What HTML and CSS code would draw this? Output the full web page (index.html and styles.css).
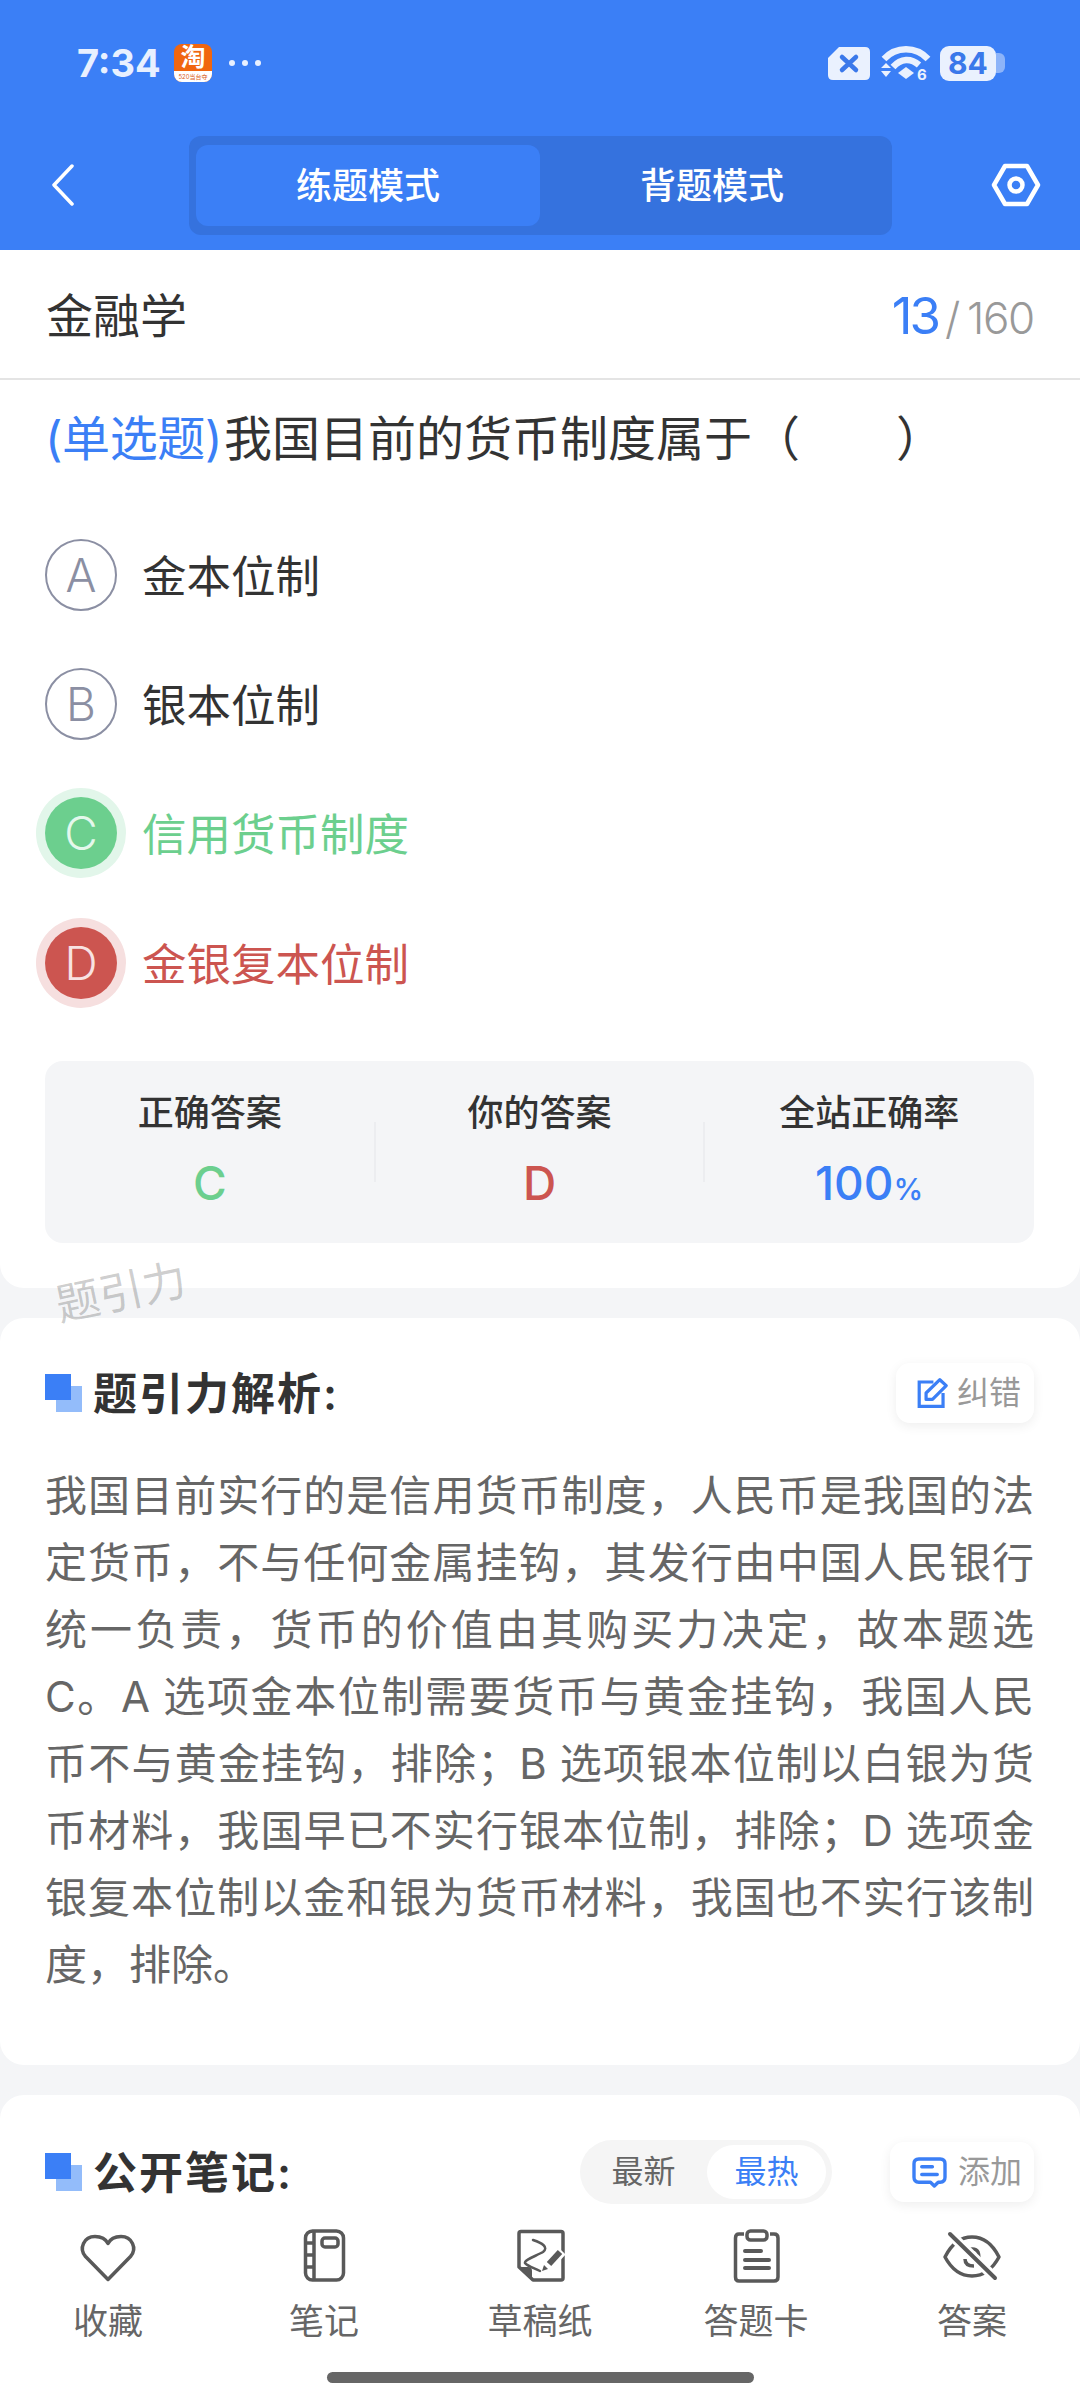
FILE: index.html
```html
<!DOCTYPE html>
<html lang="zh-CN">

<head>
  <meta charset="UTF-8">
  <meta name="viewport" content="width=device-width, initial-scale=1.0">
  <title>金融学</title>
  <link rel="stylesheet" href="styles.css">
</head>

<body>
  <div class="main">
    <header class="top">
      <div class="status">
        <div class="status-left">
          <span class="time">7:34</span>
          <span class="tao">
            <span class="tao-char">淘</span>
            <span class="tao-sub">520当台夺</span>
          </span>
          <span class="dots"><i></i><i></i><i></i></span>
        </div>
        <div class="status-right">
          <svg class="ic-sim" viewBox="0 0 44 35">
            <path d="M12 1H38Q43 1 43 6V29Q43 34 38 34H6Q1 34 1 29V12Z" fill="#eaf1fe" />
            <path d="M15 11L29 24M29 11L15 24" stroke="#3a78ea" stroke-width="4.5" stroke-linecap="round" />
          </svg>
          <svg class="ic-wifi" viewBox="0 -3 50 44">
            <path d="M3 15C15 2 35 2 47 15" fill="none" stroke="#eaf1fe" stroke-width="6.5" />
            <path d="M12 23C20 14 30 14 38 21" fill="none" stroke="#eaf1fe" stroke-width="6.5" />
            <path d="M17 29L25 23L33 29L25 35Z" fill="#eaf1fe" />
            <path d="M0 24L5 19L10 24ZM0 27H10L5 33Z" fill="#eaf1fe" />
            <text x="36" y="36" class="wifi-six">6</text>
          </svg>
          <span class="battery">
            <span class="battery-body">84</span>
            <span class="battery-nub"></span>
          </span>
        </div>
      </div>
      <nav class="nav">
        <svg class="ic-back" viewBox="0 0 24 42">
          <path d="M21 2L3 21L21 40" fill="none" stroke="#fff" stroke-width="3.5" stroke-linecap="round" stroke-linejoin="round" />
        </svg>
        <div class="modes">
          <a class="mode cur">练题模式</a>
          <a class="mode">背题模式</a>
        </div>
        <svg class="ic-hex" viewBox="0 0 50 44">
          <path d="M14 3H36L47 22L36 41H14L3 22Z" fill="none" stroke="#fff" stroke-width="4.5" stroke-linejoin="round" />
          <circle cx="25" cy="22" r="6.5" fill="none" stroke="#fff" stroke-width="4.5" />
        </svg>
      </nav>
    </header>

    <section class="card card-q">
      <div class="subject">
        <span class="subject-name">金融学</span>
        <span class="progress"><b>13</b><i>/</i>160</span>
      </div>
      <h1 class="question"><span class="q-type">(单选题)</span>我国目前的货币制度属于（　　）</h1>
      <ul class="options">
        <li class="option"><span class="letter">A</span><span class="opt-text">金本位制</span></li>
        <li class="option"><span class="letter">B</span><span class="opt-text">银本位制</span></li>
        <li class="option right"><span class="letter">C</span><span class="opt-text">信用货币制度</span></li>
        <li class="option wrong"><span class="letter">D</span><span class="opt-text">金银复本位制</span></li>
      </ul>
      <div class="stats">
        <div class="stat">
          <span class="stat-label">正确答案</span>
          <span class="stat-value green">C</span>
        </div>
        <div class="stat">
          <span class="stat-label">你的答案</span>
          <span class="stat-value red">D</span>
        </div>
        <div class="stat">
          <span class="stat-label">全站正确率</span>
          <span class="stat-value blue">100<small>%</small></span>
        </div>
      </div>
    </section>

    <section class="card card-parse">
      <div class="sec-head">
        <span class="mark"></span>
        <h2 class="sec-title">题引力解析:</h2>
        <a class="sec-btn">
          <svg class="ic-edit" viewBox="0 0 36 34">
            <path d="M19 5H3.5V31.500H29.500V17" fill="none" stroke="#3b7ff6" stroke-width="3.500" />
            <path d="M11 24V17L26 2.500L33 9L18 24Z" fill="none" stroke="#3b7ff6" stroke-width="3.500" stroke-linejoin="round" />
          </svg>
          纠错
        </a>
      </div>
      <p class="parse">我国目前实行的是信用货币制度，人民币是我国的法定货币，不与任何金属挂钩，其发行由中国人民银行统一负责，货币的价值由其购买力决定，故本题选 C。A 选项金本位制需要货币与黄金挂钩，我国人民币不与黄金挂钩，排除；B 选项银本位制以白银为货币材料，我国早已不实行银本位制，排除；D 选项金银复本位制以金和银为货币材料，我国也不实行该制度，排除。</p>
    </section>

    <section class="card card-notes">
      <div class="sec-head">
        <span class="mark"></span>
        <h2 class="sec-title">公开笔记:</h2>
        <div class="sort">
          <a class="sort-item">最新</a>
          <a class="sort-item cur">最热</a>
        </div>
        <a class="sec-btn sec-btn-add">
          <svg class="ic-note" viewBox="0 0 36 32">
            <path d="M7 2H29Q34 2 34 7V21Q34 26 29 26H27L23 30L19 26H7Q2 26 2 21V7Q2 2 7 2Z" fill="none" stroke="#3b7ff6" stroke-width="3.500" stroke-linejoin="round" />
            <path d="M10 10H21M10 18H26" stroke="#3b7ff6" stroke-width="3.500" stroke-linecap="round" />
          </svg>
          添加
        </a>
      </div>
    </section>
  </div>

  <footer class="tabbar">
    <ul class="tabs">
      <li class="tab">
        <svg class="tab-ic" viewBox="0 0 64 64">
          <path d="M32 51.500L9.500 28.500C2.500 20.500 8 8.500 19 8.500C25 8.500 30 11.500 32 15.500C34 11.500 39 8.500 45 8.500C56 8.500 61.500 20.500 54.500 28.500Z" />
        </svg>
        <span>收藏</span>
      </li>
      <li class="tab">
        <svg class="tab-ic" viewBox="0 0 64 64">
          <rect x="13.500" y="3" width="38" height="49" rx="7" />
          <path d="M22 3V52M13.500 15H22M13.500 27H22M13.500 39H22" />
          <rect x="30" y="10" width="16" height="9" rx="3" />
        </svg>
        <span>笔记</span>
      </li>
      <li class="tab">
        <svg class="tab-ic" viewBox="0 0 64 64">
          <path d="M13 3.500H53Q55 3.500 55 5.500V50Q55 52 53 52H25L11 39V5.500Q11 3.500 13 3.500Z" />
          <path d="M11 39H20Q24 39 24 43V52Z" class="fill" />
          <path d="M25 12C34 15 41 19 35 24C28 28 16 32 17 35C19 38 26 40 32 43" class="thin" />
          <path d="M40 38L54 23" class="gap" />
          <path d="M41 36L52 24" class="pen" />
          <path d="M34 43L36 37L40 41Z" class="fill" />
        </svg>
        <span>草稿纸</span>
      </li>
      <li class="tab">
        <svg class="tab-ic" viewBox="0 0 64 64">
          <path d="M20 6H15Q11.500 6 11.500 10V49Q11.500 53 15 53H50Q54 53 54 49V10Q54 6 50 6H46" />
          <rect x="23" y="3" width="20" height="9" rx="3.500" />
          <path d="M21 23H37M21 32H45M21 40H45" class="round" />
        </svg>
        <span>答题卡</span>
      </li>
      <li class="tab">
        <svg class="tab-ic" viewBox="0 0 64 64">
          <path d="M5 29C12 15 22 9 32 9C42 9 52 15 59 29C52 42 42 48 32 48C22 48 12 42 5 29Z" />
          <path d="M25 31C25 36 29 38 34 38M26 24C29 20 36 20 38 24C39 27 39 30 38 32" />
          <path d="M10 6L55 50" class="gap" />
          <path d="M10 6L55 50" class="round" />
        </svg>
        <span>答案</span>
      </li>
    </ul>
    <div class="home-bar"></div>
  </footer>

  <div class="watermark">题引力</div>
</body>

</html>
```

FILE: styles.css
```css
html,
body {
  margin: 0;
  padding: 0;
}

body {
  position: relative;
  width: 1080px;
  height: 2400px;
  overflow: hidden;
  display: flex;
  flex-direction: column;
  background-color: #f4f5f7;
  color: #333;
  font-family: "Inter", "Noto Sans CJK SC", sans-serif;
}

ul {
  list-style: none;
  padding: 0;
  margin: 0;
}

h1,
h2,
p {
  margin: 0;
}

.main {
  height: 2215px;
  overflow: hidden;
  flex: none;
}

/* header */
.top {
  background-color: #3b7ff6;
  height: 250px;
}

.status {
  height: 126px;
  display: flex;
  justify-content: space-between;
  align-items: center;
  padding: 0 75px 0 77px;
}

.status-left,
.status-right {
  display: flex;
  align-items: center;
}

.time {
  font-size: 38px;
  font-weight: 700;
  color: #e8f0ff;
  width: 97px;
}

.tao {
  width: 38px;
  height: 38px;
  border-radius: 8px;
  display: flex;
  flex-direction: column;
  align-items: center;
  background-color: #f0660f;
}

.tao-char {
  height: 27px;
  line-height: 27px;
  font-size: 25px;
  font-weight: 700;
  color: #fff;
}

.tao-sub {
  width: 100%;
  height: 11px;
  line-height: 11px;
  font-size: 6px;
  text-align: center;
  white-space: nowrap;
  border-radius: 0 0 8px 8px;
  background-color: #fff;
  color: #d9601a;
}

.dots {
  display: flex;
  gap: 7px;
  margin-left: 17px;
}

.dots i {
  width: 6px;
  height: 6px;
  border-radius: 50%;
  background-color: #e8f0ff;
}

.ic-sim {
  width: 44px;
  height: 35px;
}

.ic-wifi {
  width: 50px;
  height: 44px;
  margin-left: 10px;
}

.wifi-six {
  font-size: 15px;
  font-weight: 700;
  fill: #eaf1fe;
}

.battery {
  display: flex;
  align-items: center;
  margin-left: 9px;
}

.battery-body {
  width: 56px;
  height: 35px;
  line-height: 35px;
  border-radius: 9px;
  background-color: #eaf1fe;
  color: #3a78ea;
  font-size: 30px;
  font-weight: 700;
  text-align: center;
}

.battery-nub {
  width: 9px;
  height: 20px;
  border-radius: 0 6px 6px 0;
  background-color: #8db4f9;
}

.nav {
  height: 124px;
  display: grid;
  grid-template-columns: 189px 703px 1fr;
  align-items: start;
  padding-top: 10px;
  box-sizing: border-box;
}

.ic-back {
  width: 24px;
  height: 42px;
  margin: 28px 0 0 51px;
}

.modes {
  height: 99px;
  box-sizing: border-box;
  padding: 9px 7px;
  display: flex;
  border-radius: 12px;
  background-color: #3572de;
}

.mode {
  width: 344px;
  height: 81px;
  line-height: 83px;
  text-align: center;
  font-size: 36px;
  font-weight: 500;
  color: #fff;
  border-radius: 12px;
}

.mode.cur {
  background-color: #3b7ff6;
}

.ic-hex {
  width: 50px;
  height: 44px;
  margin: 27px 0 0 99px;
}

/* cards */
.card {
  background-color: #fff;
  border-radius: 24px;
  margin-top: 30px;
}

.card-q {
  margin-top: 0;
  border-radius: 0 0 24px 24px;
  padding-bottom: 45px;
}

.subject {
  height: 130px;
  box-sizing: border-box;
  border-bottom: 2px solid #e4e4e4;
  padding: 0 46px;
  display: flex;
  justify-content: space-between;
  align-items: center;
}

.subject-name {
  font-size: 47px;
  color: #333;
  margin-top: -3px;
}

.progress {
  font-size: 44px;
  font-weight: 300;
  letter-spacing: -1.3px;
  color: #999;
  margin-top: 2px;
}

.progress b {
  font-size: 51px;
  font-weight: 400;
  letter-spacing: -3px;
  color: #3b7ff6;
}

.progress i {
  font-style: normal;
  margin: 0 8px 0 7px;
}

.question {
  height: 130px;
  box-sizing: border-box;
  padding: 29px 0 0 45px;
  line-height: 60px;
  font-size: 48px;
  font-weight: 400;
  white-space: nowrap;
}

.q-type {
  color: #3b7ff6;
  letter-spacing: -0.4px;
  margin-right: 2px;
}

.option {
  height: 129.3px;
  display: flex;
  align-items: center;
  font-size: 44.5px;
  padding-left: 45px;
  color: #333;
}

.opt-text {
  margin-top: -3px;
}

.letter {
  width: 72px;
  height: 72px;
  box-sizing: border-box;
  border: 2px solid #8b8fa3;
  border-radius: 50%;
  margin-right: 25px;
  display: flex;
  align-items: center;
  justify-content: center;
  font-size: 46px;
  font-weight: 300;
  color: #8b8fa3;
}

.option.right {
  color: #6ccf8e;
}

.option.wrong {
  color: #cc5550;
}

.right .letter {
  border: 0;
  background-color: #6ccf8e;
  color: #e4f8ec;
  box-shadow: 0 0 0 9px #e2f6ea;
}

.wrong .letter {
  border: 0;
  background-color: #cc5550;
  color: #f8e2e2;
  box-shadow: 0 0 0 9px #f6dfdf;
}

.stats {
  margin: 34px 46px 0 45px;
  height: 182px;
  border-radius: 18px;
  background-color: #f4f5f7;
  display: grid;
  grid-template-columns: repeat(3, 1fr);
  align-items: center;
}

.stat {
  display: flex;
  flex-direction: column;
  align-items: center;
  height: 130px;
  box-sizing: border-box;
  padding-bottom: 6px;
  justify-content: space-between;
  position: relative;
}

.stat+.stat::before {
  content: "";
  position: absolute;
  left: -1px;
  top: 35px;
  height: 60px;
  width: 2px;
  background-color: #ecedf0;
}

.stat-label {
  font-size: 36px;
  font-weight: 500;
  line-height: 52px;
  color: #333;
}

.stat-value {
  font-size: 46px;
  font-weight: 500;
  line-height: 56px;
}

.stat-value small {
  font-size: 30px;
  line-height: 0;
}

.green {
  color: #6ccf8e;
}

.red {
  color: #cc5550;
}

.blue {
  color: #3b7ff6;
}

/* section head */
.card-parse {
  height: 747px;
  box-sizing: border-box;
  padding: 45px 46px 0 45px;
}

.card-notes {
  height: 200px;
  box-sizing: border-box;
  padding: 47px 46px 0 45px;
}

.sec-head {
  height: 60px;
  display: flex;
  align-items: center;
}

.mark {
  width: 26px;
  height: 26px;
  margin: -12px 22px 0 0;
  background-color: #3b7ff6;
  box-shadow: 11px 12px 0 #93bcfa;
  flex: none;
}

.sec-title {
  flex: 1;
  font-size: 44px;
  font-weight: 600;
  letter-spacing: 2px;
  margin-top: -4px;
  color: #333;
}

.sec-btn {
  height: 60px;
  padding: 0 13px 0 20px;
  display: flex;
  align-items: center;
  gap: 8px;
  border-radius: 14px;
  background-color: #fff;
  box-shadow: 0 3px 12px rgba(0, 0, 0, 0.07);
  font-size: 32px;
  line-height: 56px;
  color: #999;
}

.sec-btn-add {
  padding: 0 12px 0 22px;
  gap: 11px;
}

.ic-edit {
  width: 33px;
  height: 32px;
}

.ic-note {
  width: 35px;
  height: 31px;
}

.sort {
  display: flex;
  align-items: center;
  height: 64px;
  box-sizing: border-box;
  padding-right: 6px;
  margin-right: 58px;
  border-radius: 32px;
  background-color: #f5f5f5;
}

.sort-item {
  font-size: 32px;
  color: #666;
  line-height: 54px;
  width: 127px;
  text-align: center;
}

.sort-item.cur {
  width: 119px;
  border-radius: 27px;
  background-color: #fff;
  color: #3b7ff6;
}

.parse {
  margin-top: 39px;
  font-size: 42px;
  line-height: 67px;
  text-align: justify;
  color: #666;
}

/* bottom bar */
.tabbar {
  flex: 1;
  background-color: #fff;
}

.tabs {
  display: grid;
  grid-template-columns: repeat(5, 1fr);
  padding-top: 13px;
}

.tab {
  display: flex;
  flex-direction: column;
  align-items: center;
  font-size: 35px;
  line-height: 44px;
  color: #666;
  gap: 7px;
}

.tab-ic {
  width: 64px;
  height: 64px;
  fill: none;
  stroke: #595959;
  stroke-width: 3.5;
  stroke-linejoin: round;
}

.tab-ic .fill {
  fill: #595959;
  stroke: none;
}

.tab-ic .thin {
  stroke-width: 2.5;
  stroke-linecap: round;
}

.tab-ic .gap {
  stroke: #fff;
  stroke-width: 10;
}

.tab-ic .pen {
  stroke-width: 6;
}

.tab-ic .round {
  stroke-linecap: round;
  stroke-width: 4;
}

.home-bar {
  width: 427px;
  height: 11px;
  border-radius: 6px;
  margin: 29px auto 0;
  background-color: #666;
}

.watermark {
  position: absolute;
  left: 55px;
  top: 1268px;
  font-size: 44px;
  line-height: 48px;
  color: rgba(0, 0, 0, 0.2);
  transform: rotate(-12deg);
}
```
